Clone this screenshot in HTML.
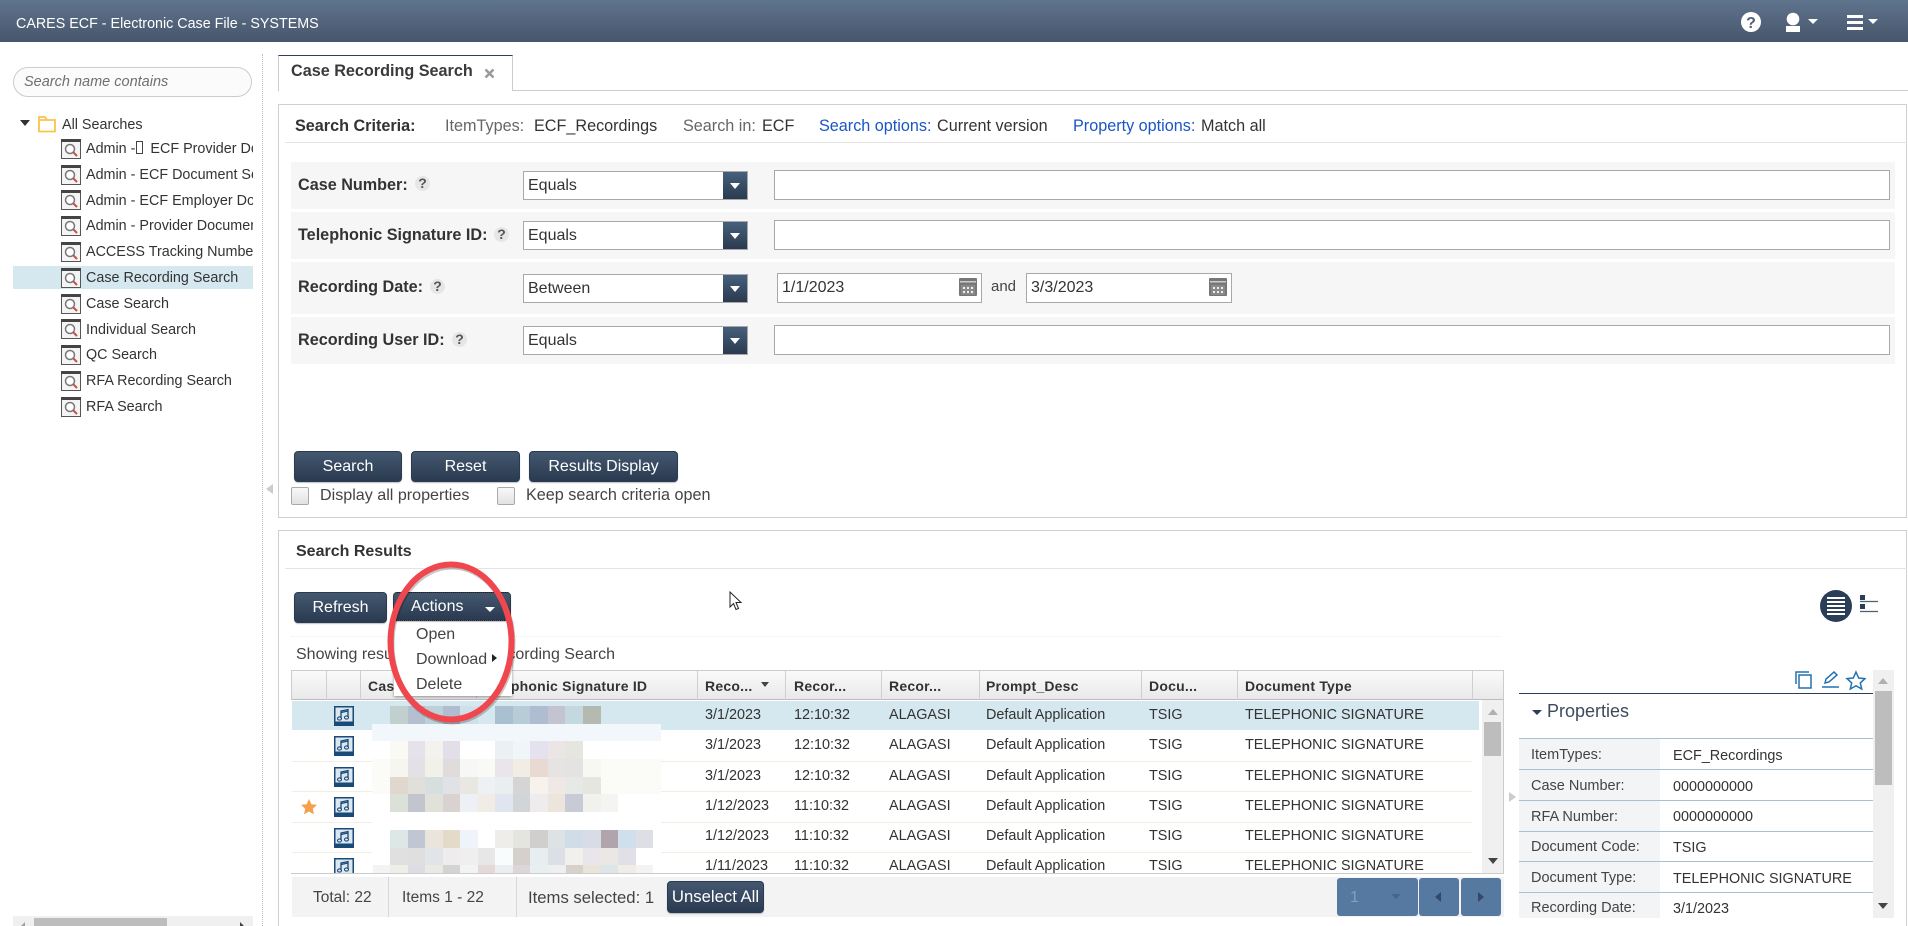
<!DOCTYPE html>
<html><head><meta charset="utf-8"><title>CARES ECF</title>
<style>
html,body{margin:0;padding:0;background:#fff}
#p{position:relative;width:1908px;height:926px;overflow:hidden;background:#fff;font-family:"Liberation Sans",Arial,sans-serif;color:#333}
#p div,#p span.a,#p svg{position:absolute}
.t{white-space:nowrap;line-height:20px;height:20px;margin-top:1px}
.b{font-weight:bold}
.g{color:#555}
.sb{font-size:16px;color:#fff;text-align:center;border-radius:4px;background:linear-gradient(#43586f,#2a3a50);border:1px solid #2a3a50;box-sizing:border-box;box-shadow:0 1px 1px rgba(0,0,0,.25)}
.row{background:#f6f6f6;left:291px;width:1604px}
.sel{left:523px;width:225px;height:29px;border:1px solid #a8a8a8;box-sizing:border-box;background:#fff}
.sel span{position:absolute;left:4px;top:4px;font-size:16px;line-height:20px;color:#333}
.sel i{position:absolute;right:0;top:0;width:24px;height:27px;background:linear-gradient(#46607c,#2a3a50)}
.sel i:after{content:"";position:absolute;left:7px;top:11px;border:5px solid transparent;border-top:6px solid #fff;border-bottom:0}
.inp{left:774px;width:1116px;height:30px;border:1px solid #a8a8a8;box-sizing:border-box;background:#fff}
.q{width:15px;height:15px;border-radius:50%;background:#e6e6e6;font-size:14px;font-weight:bold;line-height:15px;text-align:center;color:#555}
.th{font-size:14px;font-weight:bold;letter-spacing:.22px;top:676px;color:#333;margin-top:0}
.sep{top:670px;width:1px;height:30px;background:#cfcfcf}
.c{font-size:14.4px;color:#333}
.rl{left:292px;width:1180px;height:1px;background:#f0f0e2}
.m{display:flex;left:372.5px;height:18px}
.m i{display:block;width:17.55px;height:100%;flex:none}
.pl{left:1519px;width:354px;height:1px;background:#a9c0d4}
.pk{left:1531px;font-size:14.5px;color:#444}
.pv{left:1673px;font-size:14.4px;color:#333}
.mi{font-size:16px;color:#444;left:416px}
.tree{left:86px;font-size:14.35px;width:167px;overflow:hidden;color:#333}
.ar{width:0;height:0}
.cr{font-size:16.2px}
.lb{font-size:16.2px;font-weight:bold}
</style></head><body><div id="p">

<!-- header -->
<div style="left:0;top:0;width:1908px;height:42px;background:linear-gradient(#5f748d,#47566b)"></div>
<div class="t" style="left:16px;top:13px;font-size:14.3px;color:#fff">CARES ECF - Electronic Case File - SYSTEMS</div>
<svg style="left:1740px;top:11px" width="22" height="22"><circle cx="11" cy="11" r="10" fill="#fff"/><text x="11" y="17" font-size="16" font-weight="bold" text-anchor="middle" fill="#4f5f76" font-family="Liberation Sans">?</text></svg>
<svg style="left:1780px;top:11px" width="44" height="22"><circle cx="13" cy="8" r="6.3" fill="#fff"/><path d="M6 15h14l0 1h0v5H6z" fill="#fff"/><path d="M28 8h10l-5 5z" fill="#fff"/></svg>
<svg style="left:1845px;top:13px" width="40" height="20"><path d="M2 2h16v3H2zM2 8h16v3H2zM2 14h16v3H2z" fill="#fff"/><path d="M23 6h10l-5 5z" fill="#fff"/></svg>

<!-- sidebar -->
<div style="left:13px;top:67px;width:239px;height:30px;box-sizing:border-box;border:1px solid #ccc;border-radius:15px;background:#fbfbfb"></div>
<div class="t" style="left:24px;top:71px;font-size:14.5px;font-style:italic;color:#6f6f6f">Search name contains</div>
<div class="ar" style="left:20px;top:120px;border-left:5px solid transparent;border-right:5px solid transparent;border-top:6px solid #333"></div>
<svg style="left:37px;top:115px" width="20" height="18"><path d="M2 16.5V2h6l2 3h8v11.500z" fill="#fff" stroke="#fbc34f" stroke-width="1.800"/><path d="M2 5h8" stroke="#fbc34f" stroke-width="1.800"/></svg>
<div class="t" style="left:62px;top:114px;font-size:14.35px">All Searches</div>
<div style="left:13px;top:266px;width:240px;height:23px;background:#d5e8f0"></div>
<svg width="0" height="0" style="left:0;top:0"><defs><g id="si"><rect x=".5" y=".5" width="19" height="19" fill="#f4f4f4" stroke="#555"/><rect width="20" height="3" fill="#444"/><circle cx="9" cy="10" r="4.500" fill="#fff" stroke="#777" stroke-width="1.500"/><path d="M12.500 13.500l3.500 3.500" stroke="#c9523f" stroke-width="2"/></g>
<g id="mu"><rect width="20" height="20" fill="#1a4a78"/><rect x="1.500" y="1.500" width="17" height="14" fill="#dbe7ef"/><path d="M7 12V5l7-1.500V11" fill="none" stroke="#1a4a78" stroke-width="1.300"/><path d="M7 6.500l7-1.500" stroke="#1a4a78" stroke-width="1.300"/><ellipse cx="5.500" cy="12.500" rx="2" ry="1.600" fill="none" stroke="#1a4a78" stroke-width="1.100"/><ellipse cx="12.500" cy="11.500" rx="2" ry="1.600" fill="none" stroke="#1a4a78" stroke-width="1.100"/></g>
<g id="cal"><rect x="0" y="0" width="18" height="18" rx="1" fill="#777"/><rect x="1" y="3" width="16" height="1.500" fill="#ccc"/><rect x="2" y="7" width="14" height="10" fill="#8a8a8a"/><path d="M4 9h2v2H4zM8 9h2v2H8zM12 9h2v2h-2zM4 13h2v2H4zM8 13h2v2H8zM12 13h2v2h-2z" fill="#eee"/></g></defs></svg>
<svg style="left:61px;top:139px" width="20" height="20"><use href="#si"/></svg>
<svg style="left:61px;top:165px" width="20" height="20"><use href="#si"/></svg>
<svg style="left:61px;top:190px" width="20" height="20"><use href="#si"/></svg>
<svg style="left:61px;top:216px" width="20" height="20"><use href="#si"/></svg>
<svg style="left:61px;top:242px" width="20" height="20"><use href="#si"/></svg>
<svg style="left:61px;top:268px" width="20" height="20"><use href="#si"/></svg>
<svg style="left:61px;top:294px" width="20" height="20"><use href="#si"/></svg>
<svg style="left:61px;top:319px" width="20" height="20"><use href="#si"/></svg>
<svg style="left:61px;top:345px" width="20" height="20"><use href="#si"/></svg>
<svg style="left:61px;top:371px" width="20" height="20"><use href="#si"/></svg>
<svg style="left:61px;top:397px" width="20" height="20"><use href="#si"/></svg>
<div class="t tree" style="top:138px">Admin -<span style="display:inline-block;width:5px;height:11px;border:1px solid #444;margin:0 3px 0 1px;vertical-align:-1px"></span> ECF Provider Document Search</div>
<div class="t tree" style="top:164px">Admin - ECF Document Search</div>
<div class="t tree" style="top:190px">Admin - ECF Employer Document Search</div>
<div class="t tree" style="top:215px">Admin - Provider Document Search</div>
<div class="t tree" style="top:241px">ACCESS Tracking Number Search</div>
<div class="t tree" style="top:267px">Case Recording Search</div>
<div class="t tree" style="top:293px">Case Search</div>
<div class="t tree" style="top:319px">Individual Search</div>
<div class="t tree" style="top:344px">QC Search</div>
<div class="t tree" style="top:370px">RFA Recording Search</div>
<div class="t tree" style="top:396px">RFA Search</div>
<div style="left:13px;top:916px;width:240px;height:10px;background:#f0f0f0"></div>
<div style="left:34px;top:918px;width:133px;height:8px;background:#bdbdbd"></div>
<div class="ar" style="left:21px;top:922px;border-right:4px solid #a0a0a0;border-top:4px solid transparent"></div>
<div class="ar" style="left:240px;top:922px;border-left:4px solid #444;border-top:4px solid transparent"></div>
<div style="left:262px;top:54px;width:0;height:872px;border-left:1px dotted #bbb"></div>
<div class="ar" style="left:266px;top:484px;border-right:7px solid #ccc;border-top:5px solid transparent;border-bottom:5px solid transparent"></div>

<!-- tab -->
<div style="left:278px;top:90px;width:1630px;height:1px;background:#ccc"></div>
<div style="left:278px;top:55px;width:235px;height:36px;box-sizing:border-box;background:#fff;border:1px solid #ccc;border-bottom:0;border-top:1px solid #2f3f55"></div>
<div class="t b" style="left:291px;top:60px;font-size:16.2px;color:#3a3a3a">Case Recording Search</div>
<svg style="left:484px;top:68px" width="11" height="11"><path d="M1.500 1.500l8 8M9.500 1.500l-8 8" stroke="#999" stroke-width="2.500"/></svg>

<!-- criteria -->
<div style="left:278px;top:104px;width:1629px;height:414px;box-sizing:border-box;border:1px solid #d0d0d0"></div>
<div style="left:285px;top:142px;width:1622px;height:1px;background:#e4e4e4"></div>
<div class="t b cr" style="left:295px;top:115px">Search Criteria:</div>
<div class="t cr" style="left:445px;top:115px;color:#666">ItemTypes:</div>
<div class="t cr" style="left:534px;top:115px">ECF_Recordings</div>
<div class="t cr" style="left:683px;top:115px;color:#666">Search in:</div>
<div class="t cr" style="left:762px;top:115px">ECF</div>
<div class="t cr" style="left:819px;top:115px;color:#1a56c4">Search options:</div>
<div class="t cr" style="left:937px;top:115px">Current version</div>
<div class="t cr" style="left:1073px;top:115px;color:#1a56c4">Property options:</div>
<div class="t cr" style="left:1201px;top:115px">Match all</div>

<div class="row" style="top:162px;height:47px"></div>
<div class="row" style="top:212px;height:47px"></div>
<div class="row" style="top:262px;height:52px"></div>
<div class="row" style="top:317px;height:47px"></div>
<div class="t lb" style="left:298px;top:174px">Case Number:</div>
<div class="q" style="left:415px;top:176px">?</div>
<div class="t lb" style="left:298px;top:224px">Telephonic Signature ID:</div>
<div class="q" style="left:494px;top:227px">?</div>
<div class="t lb" style="left:298px;top:276px">Recording Date:</div>
<div class="q" style="left:430px;top:279px">?</div>
<div class="t lb" style="left:298px;top:329px">Recording User ID:</div>
<div class="q" style="left:452px;top:332px">?</div>

<div class="sel" style="top:171px"><span>Equals</span><i></i></div>
<div class="sel" style="top:221px"><span>Equals</span><i></i></div>
<div class="sel" style="top:274px"><span>Between</span><i></i></div>
<div class="sel" style="top:326px"><span>Equals</span><i></i></div>
<div class="inp" style="top:170px"></div>
<div class="inp" style="top:220px"></div>
<div class="inp" style="top:325px"></div>
<div class="inp" style="top:273px;left:777px;width:205px"></div>
<div class="inp" style="top:273px;left:1026px;width:206px"></div>
<div class="t" style="left:782px;top:277px;font-size:16px">1/1/2023</div>
<div class="t" style="left:1031px;top:277px;font-size:16px">3/3/2023</div>
<div class="t" style="left:991px;top:276px;font-size:15px;color:#444">and</div>
<svg style="left:959px;top:278px" width="18" height="18"><use href="#cal"/></svg>
<svg style="left:1209px;top:278px" width="18" height="18"><use href="#cal"/></svg>

<div class="sb" style="left:294px;top:451px;width:108px;height:31px;line-height:30px">Search</div>
<div class="sb" style="left:411px;top:451px;width:109px;height:31px;line-height:30px">Reset</div>
<div class="sb" style="left:529px;top:451px;width:149px;height:31px;line-height:30px">Results Display</div>
<div style="left:291px;top:487px;width:18px;height:18px;box-sizing:border-box;border:1px solid #aaa;border-radius:2px;background:linear-gradient(#f8f8f8,#e2e2e2)"></div>
<div class="t" style="left:320px;top:484px;font-size:16.1px;color:#444">Display all properties</div>
<div style="left:497px;top:487px;width:18px;height:18px;box-sizing:border-box;border:1px solid #aaa;border-radius:2px;background:linear-gradient(#f8f8f8,#e2e2e2)"></div>
<div class="t" style="left:526px;top:484px;font-size:16.2px;color:#444">Keep search criteria open</div>

<!-- results -->
<div style="left:278px;top:530px;width:1629px;height:400px;box-sizing:border-box;border:1px solid #d0d0d0"></div>
<div style="left:285px;top:568px;width:1622px;height:1px;background:#e4e4e4"></div>
<div class="t b" style="left:296px;top:541px;font-size:16px">Search Results</div>
<div class="sb" style="left:294px;top:592px;width:93px;height:31px;line-height:29px">Refresh</div>
<div style="left:291px;top:636px;width:1210px;height:0;border-top:1px dotted #eee"></div>
<div class="t" style="left:296px;top:644px;font-size:16px;color:#444">Showing results for</div>
<div class="t" style="left:445px;width:170px;text-align:right;top:644px;font-size:16px;color:#444">Case Recording Search</div>
<svg style="left:729px;top:591px" width="14" height="20"><path d="M1 1v15l3.500-3.500 2.500 6 2.500-1-2.500-6h5z" fill="#fff" stroke="#222" stroke-width="1"/></svg>
<svg style="left:1819px;top:589px" width="34" height="34"><circle cx="17" cy="17" r="16" fill="#2b3e57"/><path d="M8 8h18v2H8zM8 12h18v2H8zM8 16h18v2H8zM8 20h18v2H8zM8 24h18v2H8z" fill="#fff"/></svg>
<svg style="left:1858px;top:593px" width="22" height="22"><path d="M2 2h5v5H2zM2 11h5v5H2z" fill="#2b3e57"/><path d="M2 8.500h18M2 18.500h18" stroke="#4d5f75" stroke-width="1.300"/></svg>

<!-- table -->
<div style="left:291px;top:670px;width:1213px;height:30px;box-sizing:border-box;border:1px solid #ccc;border-bottom:1px solid #bbb;background:linear-gradient(#fafafa,#e9e9e9)"></div>
<div class="sep" style="left:326px"></div><div class="sep" style="left:360px"></div><div class="sep" style="left:476px"></div><div class="sep" style="left:697px"></div><div class="sep" style="left:785px"></div><div class="sep" style="left:881px"></div><div class="sep" style="left:979px"></div><div class="sep" style="left:1141px"></div><div class="sep" style="left:1237px"></div><div class="sep" style="left:1472px"></div>
<div class="t th" style="left:368px">Case Number</div>
<div class="t th" style="left:483px">Telephonic Signature ID</div>
<div class="t th" style="left:705px">Reco...</div>
<div class="ar" style="left:761px;top:682px;border-left:4px solid transparent;border-right:4px solid transparent;border-top:5px solid #444"></div>
<div class="t th" style="left:794px">Recor...</div>
<div class="t th" style="left:889px">Recor...</div>
<div class="t th" style="left:986px">Prompt_Desc</div>
<div class="t th" style="left:1149px">Docu...</div>
<div class="t th" style="left:1245px">Document Type</div>

<div style="left:292px;top:701px;width:1187px;height:29px;background:#d5e8f0"></div>
<div class="rl" style="top:761px"></div><div class="rl" style="top:791px"></div><div class="rl" style="top:822px"></div><div class="rl" style="top:852px"></div>

<div class="t c" style="left:705px;top:704px">3/1/2023</div><div class="t c" style="left:794px;top:704px">12:10:32</div><div class="t c" style="left:889px;top:704px">ALAGASI</div><div class="t c" style="left:986px;top:704px">Default Application</div><div class="t c" style="left:1149px;top:704px">TSIG</div><div class="t c" style="left:1245px;top:704px">TELEPHONIC SIGNATURE</div>
<div class="t c" style="left:705px;top:734px">3/1/2023</div><div class="t c" style="left:794px;top:734px">12:10:32</div><div class="t c" style="left:889px;top:734px">ALAGASI</div><div class="t c" style="left:986px;top:734px">Default Application</div><div class="t c" style="left:1149px;top:734px">TSIG</div><div class="t c" style="left:1245px;top:734px">TELEPHONIC SIGNATURE</div>
<div class="t c" style="left:705px;top:765px">3/1/2023</div><div class="t c" style="left:794px;top:765px">12:10:32</div><div class="t c" style="left:889px;top:765px">ALAGASI</div><div class="t c" style="left:986px;top:765px">Default Application</div><div class="t c" style="left:1149px;top:765px">TSIG</div><div class="t c" style="left:1245px;top:765px">TELEPHONIC SIGNATURE</div>
<div class="t c" style="left:705px;top:795px">1/12/2023</div><div class="t c" style="left:794px;top:795px">11:10:32</div><div class="t c" style="left:889px;top:795px">ALAGASI</div><div class="t c" style="left:986px;top:795px">Default Application</div><div class="t c" style="left:1149px;top:795px">TSIG</div><div class="t c" style="left:1245px;top:795px">TELEPHONIC SIGNATURE</div>
<div class="t c" style="left:705px;top:825px">1/12/2023</div><div class="t c" style="left:794px;top:825px">11:10:32</div><div class="t c" style="left:889px;top:825px">ALAGASI</div><div class="t c" style="left:986px;top:825px">Default Application</div><div class="t c" style="left:1149px;top:825px">TSIG</div><div class="t c" style="left:1245px;top:825px">TELEPHONIC SIGNATURE</div>
<div class="t c" style="left:705px;top:855px">1/11/2023</div><div class="t c" style="left:794px;top:855px">11:10:32</div><div class="t c" style="left:889px;top:855px">ALAGASI</div><div class="t c" style="left:986px;top:855px">Default Application</div><div class="t c" style="left:1149px;top:855px">TSIG</div><div class="t c" style="left:1245px;top:855px">TELEPHONIC SIGNATURE</div>

<svg style="left:334px;top:706px" width="20" height="20"><use href="#mu"/></svg>
<svg style="left:334px;top:736px" width="20" height="20"><use href="#mu"/></svg>
<svg style="left:334px;top:767px" width="20" height="20"><use href="#mu"/></svg>
<svg style="left:334px;top:797px" width="20" height="20"><use href="#mu"/></svg>
<svg style="left:334px;top:828px" width="20" height="20"><use href="#mu"/></svg>
<svg style="left:334px;top:858px" width="20" height="15" viewBox="0 0 20 15"><use href="#mu"/></svg>
<svg style="left:301px;top:799px" width="16" height="16" viewBox="0 0 16 16"><path d="M8 0l2.400 5.300 5.600.6-4.200 3.800 1.200 5.700L8 12.500 3 15.400l1.200-5.700L0 5.900l5.600-.6z" fill="#f5a04a"/></svg>

<!-- mosaic -->
<div class="m" style="top:706px;left:390px"><i style="background:#c2cfcf"></i><i style="background:#b4c0d0"></i><i style="background:#bcd0d8"></i><i style="background:#b0bcd0"></i><i style="background:#cfe0ea"></i><i style="background:#d5e8f0"></i><i style="background:#a8c0d0"></i><i style="background:#b8ccd8"></i><i style="background:#b0bccf"></i><i style="background:#c4c4d0"></i><i style="background:#c4d8e0"></i><i style="background:#b4bab0"></i></div>
<div style="left:372px;top:724px;width:289px;height:17px;background:#f2f7fb"></div>
<div style="left:372px;top:741px;width:289px;height:132px;background:#fff"></div>
<div style="left:372px;top:759px;width:289px;height:35px;background:#fbfbf7"></div>
<div class="m" style="top:741px;left:390px"><i style="background:#faf9f4"></i><i style="background:#e6e2ec"></i><i style="background:#f3f2ee"></i><i style="background:#e3dfe9"></i><i style="background:#fff"></i><i style="background:#fff"></i><i style="background:#edf0f2"></i><i style="background:#f0f5f7"></i><i style="background:#e3e2ee"></i><i style="background:#ebe5e5"></i><i style="background:#e6e6e0"></i></div>
<div class="m" style="top:759px;left:390px"><i style="background:#f6f6f0"></i><i style="background:#e4e1e6"></i><i style="background:#f1f1e9"></i><i style="background:#e0dcdc"></i><i style="background:#f7f8f6"></i><i style="background:#f9faf6"></i><i style="background:#e9e5e9"></i><i style="background:#f1ede4"></i><i style="background:#e8dad2"></i><i style="background:#e6e3e3"></i><i style="background:#e4e3e1"></i><i style="background:#f7f8f2"></i></div>
<div class="m" style="top:777px;left:390px;height:17px"><i style="background:#e0d8cf"></i><i style="background:#e0dfd9"></i><i style="background:#d7dede"></i><i style="background:#e1e2e5"></i><i style="background:#e8e7e2"></i><i style="background:#edf1f3"></i><i style="background:#ebeef0"></i><i style="background:#d5d5d5"></i><i style="background:#f7f2eb"></i><i style="background:#efe8e4"></i><i style="background:#e7e9e7"></i><i style="background:#e5e6e0"></i></div>
<div class="m" style="top:794px;left:390px"><i style="background:#dbe0d8"></i><i style="background:#c2c4ce"></i><i style="background:#e0e1d9"></i><i style="background:#dad2d0"></i><i style="background:#edf0f4"></i><i style="background:#f1ece5"></i><i style="background:#e0e5f0"></i><i style="background:#d2d5d7"></i><i style="background:#eeecec"></i><i style="background:#ebe5dc"></i><i style="background:#c8cbd5"></i><i style="background:#f1f1ed"></i><i style="background:#f4f4f2"></i></div>
<div class="m" style="top:830px;left:390px"><i style="background:#dde7e6"></i><i style="background:#c0c7d2"></i><i style="background:#e9e4dc"></i><i style="background:#e4dac8"></i><i style="background:#eff3fa"></i><i style="background:#fff"></i><i style="background:#efede9"></i><i style="background:#e4e5df"></i><i style="background:#d0cfcd"></i><i style="background:#dde3e5"></i><i style="background:#d0dce8"></i><i style="background:#d8dce6"></i><i style="background:#b0a5ab"></i><i style="background:#cfe0ec"></i><i style="background:#dedfe5"></i></div>
<div class="m" style="top:848px;left:390px;height:17px"><i style="background:#e0e0e0"></i><i style="background:#e0dfdf"></i><i style="background:#e2e5e8"></i><i style="background:#eeeced"></i><i style="background:#f0eff0"></i><i style="background:#e8e7e8"></i><i style="background:#f9fcfd"></i><i style="background:#d6d0cc"></i><i style="background:#e8edef"></i><i style="background:#dddfe6"></i><i style="background:#f2f0ec"></i><i style="background:#e9e6eb"></i><i style="background:#ebe7e4"></i><i style="background:#e0e0e6"></i></div>
<div class="m" style="top:865px;left:372.500px;height:8px"><i style="background:#f3f3f3"></i><i style="background:#eeeee8"></i><i style="background:#dedbe5"></i><i style="background:#eaeae4"></i><i style="background:#d5d2d2"></i><i style="background:#f3f3f5"></i><i style="background:#e5d8d8"></i><i style="background:#eaeef0"></i><i style="background:#dcd6da"></i><i style="background:#e8eff0"></i><i style="background:#eef0ef"></i><i style="background:#d8d0ca"></i><i style="background:#e9e3dc"></i><i style="background:#dde5e8"></i><i style="background:#f0ece8"></i><i style="background:#f3f3f3"></i></div>

<!-- table scrollbar -->
<div style="left:1482px;top:700px;width:22px;height:173px;background:#f0f0f0;border-right:1px solid #ccc;box-sizing:border-box"></div>
<div style="left:1484px;top:722px;width:17px;height:34px;background:#bdbdbd"></div>
<div class="ar" style="left:1488px;top:709px;border-left:5px solid transparent;border-right:5px solid transparent;border-bottom:6px solid #b0b0b0"></div>
<div class="ar" style="left:1488px;top:858px;border-left:5px solid transparent;border-right:5px solid transparent;border-top:6px solid #444"></div>

<!-- footer bar -->
<div style="left:291px;top:873px;width:1213px;height:1px;background:#ccc"></div>
<div style="left:292px;top:877px;width:1212px;height:40px;background:#f3f3f3"></div>
<div style="left:388px;top:877px;width:1px;height:40px;background:#d8d8d8"></div>
<div style="left:516px;top:877px;width:1px;height:40px;background:#d8d8d8"></div>
<div class="t" style="left:313px;top:887px;font-size:15.5px;color:#444">Total: 22</div>
<div class="t" style="left:402px;top:887px;font-size:15.5px;color:#444">Items 1 - 22</div>
<div class="t" style="left:528px;top:887px;font-size:16.7px;color:#444">Items selected: 1</div>
<div class="sb" style="left:667px;top:881px;width:97px;height:32px;line-height:30px;font-size:16.7px">Unselect All</div>
<div style="left:1337px;top:878px;width:81px;height:38px;background:#5679a2;border-radius:3px"></div>
<div style="left:1419px;top:878px;width:40px;height:38px;background:#5679a2;border-radius:3px"></div>
<div style="left:1461px;top:878px;width:40px;height:38px;background:#5679a2;border-radius:3px"></div>
<div class="t" style="left:1350px;top:887px;font-size:16px;color:#86a0bd">1</div>
<div class="ar" style="left:1391px;top:894px;border-left:5px solid transparent;border-right:5px solid transparent;border-top:5px solid #45658b"></div>
<div class="ar" style="left:1435px;top:892px;border-right:6px solid #33496a;border-top:5px solid transparent;border-bottom:5px solid transparent"></div>
<div class="ar" style="left:1478px;top:892px;border-left:6px solid #33496a;border-top:5px solid transparent;border-bottom:5px solid transparent"></div>

<!-- properties -->
<div class="ar" style="left:1509px;top:792px;border-left:7px solid #ccc;border-top:5px solid transparent;border-bottom:5px solid transparent"></div>
<svg style="left:1794px;top:670px" width="72" height="22" fill="none" stroke="#2472ae" stroke-width="1.500"><path d="M2 14V2h13"/><rect x="5" y="5" width="12" height="13"/><path d="M28 17h17" stroke-width="1.400"/><path d="M31 13l1-4 8-7 3 3-8 7z"/><path d="M62 2l2.700 6 6.300.6-4.700 4.300 1.400 6.100-5.700-3.300-5.700 3.300 1.400-6.100-4.700-4.300 6.300-.6z"/></svg>
<div style="left:1519px;top:693px;width:354px;height:1px;background:#2c3e57"></div>
<div class="ar" style="left:1532px;top:710px;border-left:5px solid transparent;border-right:5px solid transparent;border-top:5px solid #2c3e57"></div>
<div class="t" style="left:1547px;top:700px;font-size:18px;color:#3d4a5c">Properties</div>
<div style="left:1519px;top:738px;width:141px;height:180px;background:#f2f4f6"></div>
<div class="pl" style="top:738px"></div><div class="pl" style="top:769px"></div><div class="pl" style="top:800px"></div><div class="pl" style="top:831px"></div><div class="pl" style="top:861px"></div><div class="pl" style="top:892px"></div>
<div class="t pk" style="top:744px">ItemTypes:</div><div class="t pv" style="top:745px">ECF_Recordings</div>
<div class="t pk" style="top:775px">Case Number:</div><div class="t pv" style="top:776px">0000000000</div>
<div class="t pk" style="top:806px">RFA Number:</div><div class="t pv" style="top:806px">0000000000</div>
<div class="t pk" style="top:836px">Document Code:</div><div class="t pv" style="top:837px">TSIG</div>
<div class="t pk" style="top:867px">Document Type:</div><div class="t pv" style="top:868px">TELEPHONIC SIGNATURE</div>
<div class="t pk" style="top:897px">Recording Date:</div><div class="t pv" style="top:898px">3/1/2023</div>
<div style="left:1873px;top:670px;width:21px;height:248px;background:#f0f0f0"></div>
<div style="left:1875px;top:691px;width:17px;height:94px;background:#bdbdbd"></div>
<div class="ar" style="left:1878px;top:678px;border-left:5px solid transparent;border-right:5px solid transparent;border-bottom:6px solid #b0b0b0"></div>
<div class="ar" style="left:1878px;top:903px;border-left:5px solid transparent;border-right:5px solid transparent;border-top:6px solid #444"></div>

<!-- actions dropdown -->
<div style="left:394px;top:620px;width:118px;height:76px;background:#fff;box-shadow:0 1px 3px rgba(0,0,0,.4)"></div>
<div class="sb" style="left:393px;top:592px;width:118px;height:29px;text-align:left;border-radius:4px 4px 0 0;border:1px dotted #222"></div>
<div class="t" style="left:411px;top:596px;font-size:16px;color:#fff">Actions</div>
<div class="ar" style="left:485px;top:607px;border-left:5px solid transparent;border-right:5px solid transparent;border-top:5px solid #fff"></div>
<div class="t mi" style="top:624px">Open</div>
<div class="t mi" style="top:649px">Download</div>
<div class="ar" style="left:492px;top:654px;border-left:5px solid #222;border-top:4.500px solid transparent;border-bottom:4.500px solid transparent"></div>
<div class="t mi" style="top:674px">Delete</div>

<!-- red ellipse -->
<svg style="left:380px;top:555px" width="145" height="175"><ellipse cx="71" cy="87" rx="60.500" ry="77.500" fill="none" stroke="rgba(0,0,0,.22)" stroke-width="6" transform="translate(1 2)"/><ellipse cx="71" cy="87" rx="60.500" ry="77.500" fill="none" stroke="#f0474e" stroke-width="6"/></svg>

</div></body></html>
